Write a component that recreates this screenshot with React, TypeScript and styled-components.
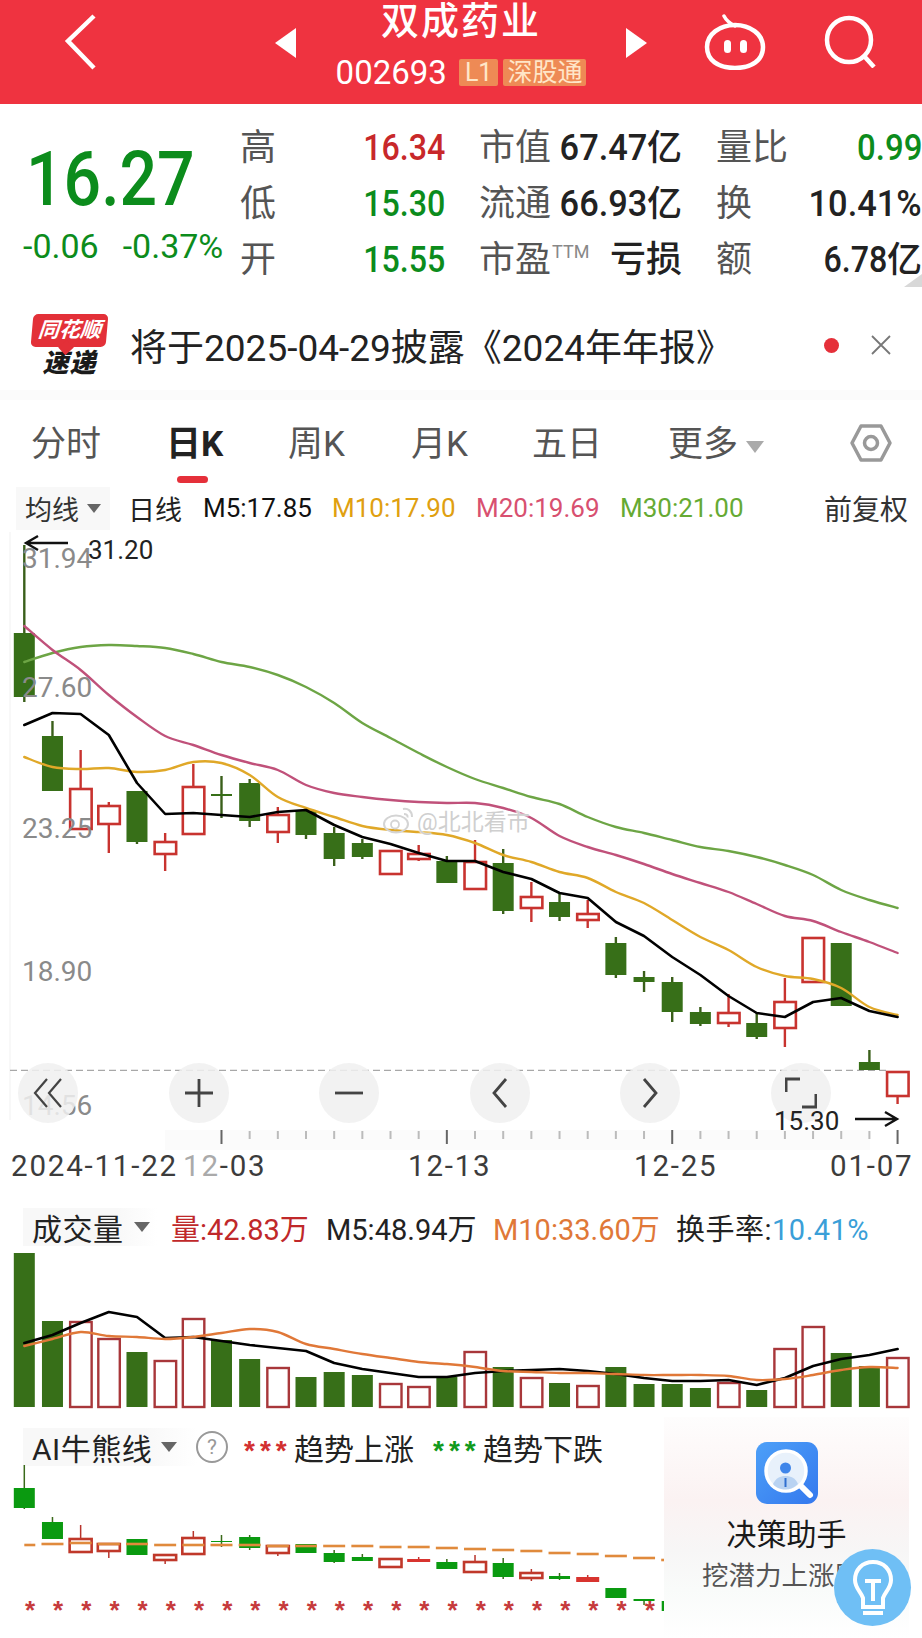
import React from 'react';
import styled, { createGlobalStyle } from 'styled-components';

const Global = createGlobalStyle`
  html, body { margin: 0; padding: 0; background: #fff; }
  body { font-family: Roboto, "Noto Sans CJK SC", sans-serif; color: #222; }
  #root { width: 922px; height: 1638px; overflow: hidden; }
`;

const Page = styled.div`
  position: relative;
  width: 922px;
  height: 1638px;
  overflow: hidden;
  background: #fff;
`;

/* ---------- header ---------- */
const Header = styled.header`
  height: 104px;
  background: #ef3340;
  display: grid;
  grid-template-columns: 275px 372px 275px;
  color: #fff;
`;
const HeaderSide = styled.div`
  display: flex;
  align-items: flex-start;
  padding-top: 14px;
  padding-left: ${p => p.$pad}px;
  gap: ${p => p.$gap || 0}px;
`;
const HeaderCenter = styled.div`
  display: flex;
  align-items: flex-start;
  justify-content: space-between;
`;
const Arrow = styled.div`
  margin-top: 28px;
  width: 0;
  height: 0;
  border-top: 15px solid transparent;
  border-bottom: 15px solid transparent;
  ${p => (p.$dir === 'left' ? 'border-right: 21px solid #fff;' : 'border-left: 21px solid #fff;')}
`;
const TitleBlock = styled.div`
  display: flex;
  flex-direction: column;
  align-items: center;
`;
const Title = styled.h1`
  margin: 0;
  height: 42px;
  font-size: 38px;
  line-height: 42px;
  font-weight: 500;
  letter-spacing: 2px;
  white-space: nowrap;
`;
const SubRow = styled.div`
  display: flex;
  align-items: center;
  gap: 5px;
  margin-top: 16px;
  height: 28px;
`;
const Ticker = styled.span`
  font-size: 33px;
  margin-right: 7px;
`;
const Badge = styled.span`
  height: 27px;
  line-height: 27px;
  padding: 0 ${p => p.$pad}px;
  background: #ee8a55;
  color: #ffe6c8;
  font-size: 25px;
  border-radius: 2px;
`;

/* ---------- quote ---------- */
const Quote = styled.section`
  height: 196px;
  display: flex;
  position: relative;
`;
const PriceBlock = styled.div`
  width: 240px;
  flex: none;
  padding: 35px 0 0 23px;
  box-sizing: border-box;
`;
const Price = styled.div`
  font-family: Roboto, sans-serif;
  font-size: 76px;
  line-height: 80px;
  font-weight: 500;
  color: #0c8c1c;
  transform: translateX(3px) scaleX(0.87);
  transform-origin: left center;
`;
const Deltas = styled.div`
  display: flex;
  gap: 24px;
  margin-top: 9px;
  font-size: 34px;
  line-height: 36px;
  color: #0c8c1c;
  white-space: nowrap;
`;
const QuoteGrid = styled.div`
  display: grid;
  grid-template-columns: 205px 203px 206px;
  grid-auto-rows: 56px;
  column-gap: 34px;
  padding-top: 12px;
`;
const Cell = styled.div`
  display: flex;
  align-items: center;
  justify-content: space-between;
  white-space: nowrap;
`;
const Label = styled.span`
  font-size: 36px;
  color: #555;
`;
const Ttm = styled.sup`
  font-size: 18px;
  color: #888;
  vertical-align: 14px;
  line-height: 0;
  margin-left: 1px;
`;
const Value = styled.span`
  display: flex;
  align-items: baseline;
  padding-top: 8px;
  font-size: 37px;
  font-weight: 500;
  line-height: 44px;
  color: ${p => p.$color || '#222'};
`;
const Digits = styled.span`
  display: inline-block;
  transform: scaleX(${p => p.$sx || 0.87});
  transform-origin: right center;
`;
const Unit = styled.span`
  font-size: 35px;
`;
const ValueBold = styled.span`
  font-size: 36px;
  font-weight: 500;
  color: #222;
`;
const Corner = styled.div`
  position: absolute;
  right: 0;
  bottom: 13px;
  width: 0;
  height: 0;
  border-left: 18px solid transparent;
  border-bottom: 13px solid #d8d8d8;
`;

/* ---------- news ---------- */
const News = styled.section`
  height: 90px;
  display: flex;
  align-items: center;
  padding: 0 31px 0 32px;
  box-sizing: border-box;
`;
const LogoBox = styled.div`
  width: 75px;
  flex: none;
  display: flex;
  flex-direction: column;
  align-items: center;
`;
const LogoBubble = styled.div`
  width: 75px;
  height: 33px;
  background: #e33038;
  border-radius: 5px;
  color: #fff;
  font-size: 21px;
  line-height: 33px;
  font-weight: 700;
  font-style: italic;
  text-align: center;
  white-space: nowrap;
  transform: skewX(-5deg);
  position: relative;
  &::after {
    content: '';
    position: absolute;
    left: 30px;
    bottom: -6px;
    width: 11px;
    height: 11px;
    background: #e33038;
    transform: rotate(45deg);
  }
`;
const LogoText = styled.div`
  margin-top: 3px;
  font-size: 26px;
  line-height: 27px;
  font-weight: 900;
  font-style: italic;
  color: #1a1a1a;
  letter-spacing: 1px;
`;
const NewsText = styled.div`
  flex: 1;
  margin: 8px 0 0 23px;
  font-size: 37px;
  line-height: 42px;
  color: #222;
  white-space: nowrap;
`;
const NewsDot = styled.span`
  width: 15px;
  height: 15px;
  border-radius: 50%;
  background: #e5303a;
  margin-right: 32px;
`;
const Band = styled.div`
  height: 10px;
  background: #fbfbfb;
`;

/* ---------- tabs ---------- */
const Tabs = styled.nav`
  height: 84px;
  position: relative;
  display: flex;
  align-items: center;
  padding: 0 31px 0 31px;
  box-sizing: border-box;
`;
const Tab = styled.span`
  width: ${p => p.$w}px;
  flex: none;
  font-size: 35px;
  line-height: 40px;
  margin-top: 6px;
  color: ${p => (p.$active ? '#222' : '#555')};
  font-weight: ${p => (p.$active ? 700 : 400)};
  position: relative;
  white-space: nowrap;
  ${p =>
    p.$active
      ? `&::after {
          content: '';
          position: absolute;
          left: 11px;
          top: 51px;
          width: 31px;
          height: 7px;
          border-radius: 4px;
          background: #e5303a;
        }`
      : ''}
`;
const Caret = styled.i`
  display: inline-block;
  width: 0;
  height: 0;
  border-left: ${p => p.$s}px solid transparent;
  border-right: ${p => p.$s}px solid transparent;
  border-top: ${p => Math.round(p.$s * 1.3)}px solid ${p => p.$c || '#666'};
  margin-left: ${p => p.$m || 0}px;
  vertical-align: middle;
`;
const HexWrap = styled.span`
  flex: none;
  margin-top: 2px;
  display: flex;
`;

/* ---------- indicators ---------- */
const IndicatorRow = styled.div`
  height: 48px;
  display: flex;
  align-items: center;
  padding-left: 16px;
  font-size: 27px;
  white-space: nowrap;
`;
const Chip = styled.div`
  width: 94px;
  height: 43px;
  flex: none;
  box-sizing: border-box;
  padding-left: 9px;
  display: flex;
  align-items: center;
  background: #f8f8f8;
  color: #333;
  margin-right: 18px;
`;
const MaText = styled.span`
  flex: none;
  width: ${p => p.$w}px;
  color: ${p => p.$c};
  font-size: ${p => p.$fs || 27}px;
`;

/* ---------- charts ---------- */
const ChartWrap = styled.div`
  position: relative;
  height: ${p => p.$h}px;
  margin-top: ${p => p.$mt || 0}px;
`;
const ChartSvg = styled.svg`
  display: block;
  width: 922px;
  height: 100%;
`;
const ToolBar = styled.div`
  position: absolute;
  left: 18px;
  top: 531px;
  display: flex;
  gap: 90.6px;
`;
const RoundBtn = styled.div`
  width: 60px;
  height: 60px;
  border-radius: 50%;
  background: rgba(240, 240, 240, 0.86);
  display: flex;
  align-items: center;
  justify-content: center;
  color: #444;
`;
const PriceTag = styled.span`
  position: absolute;
  left: 774px;
  top: 574px;
  font-size: 26px;
  line-height: 30px;
  color: #222;
`;
const Watermark = styled.div`
  position: absolute;
  left: 383px;
  top: 271px;
  display: flex;
  align-items: center;
  gap: 3px;
  font-size: 23px;
  color: #cfcfcf;
  text-shadow: 0 0 2px #fff, 0 0 2px #fff;
  white-space: nowrap;
`;
const PanelHead = styled.div`
  height: ${p => p.$h}px;
  margin-top: ${p => p.$mt || 0}px;
  display: flex;
  align-items: center;
  padding-left: 23px;
  white-space: nowrap;
  font-size: 29px;
`;
const HeadChip = styled.div`
  width: ${p => p.$w}px;
  height: 38px;
  flex: none;
  box-sizing: border-box;
  padding-left: 9px;
  display: flex;
  align-items: center;
  font-size: 30px;
  letter-spacing: 0.5px;
  color: #222;
  background: linear-gradient(90deg, #f8f8f8 70%, #fff);
`;
const HeadStat = styled.span`
  flex: none;
  width: ${p => p.$w}px;
  color: ${p => p.$c || '#222'};
`;
const Turnover = styled.span`
  letter-spacing: 0.5px;
`;
const Blue = styled.span`
  color: #3a9fd8;
`;
const Help = styled.span`
  width: 28px;
  height: 28px;
  flex: none;
  margin: 0 16px 0 -1px;
  border: 2px solid #999;
  border-radius: 50%;
  font-size: 21px;
  line-height: 28px;
  text-align: center;
  color: #999;
`;
const Stars = styled.span`
  flex: none;
  width: ${p => p.$w}px;
  font-family: "Liberation Sans", sans-serif;
  font-weight: 700;
  font-size: 28px;
  letter-spacing: 5px;
  color: ${p => p.$c};
  line-height: 30px;
  height: 22px;
`;
const TrendText = styled.span`
  flex: none;
  width: ${p => p.$w}px;
  font-size: 30px;
  color: #222;
`;

/* ---------- floating panel ---------- */
const Floating = styled.aside`
  position: absolute;
  left: 664px;
  top: 1417px;
  width: 245px;
  height: 221px;
  background: linear-gradient(180deg, #fefdfd 0%, #fbf2f2 38%, #f7f6f6 60%, #f9fbfa 78%, #fff 100%);
  display: flex;
  flex-direction: column;
  align-items: center;
  padding-top: 25px;
  box-sizing: border-box;
`;
const AssistantTitle = styled.div`
  margin-top: 11px;
  font-size: 30px;
  line-height: 40px;
  color: #1a1a1a;
`;
const AssistantSub = styled.div`
  margin-top: 4px;
  font-size: 26.5px;
  line-height: 34px;
  color: #555;
  white-space: nowrap;
  align-self: flex-start;
  padding-left: 38px;
`;
const Bulb = styled.div`
  position: absolute;
  left: 834px;
  top: 1549px;
  width: 77px;
  height: 77px;
  border-radius: 50%;
  background: #6fbff5;
  display: flex;
  align-items: center;
  justify-content: center;
`;

/* ---------- data ---------- */
const X = (i: number) => 24.3 + 28.17 * i;
type K = ['g' | 'r', number, number, number, number];
const candles: K[] = [
  ['g', 545, 633, 697, 702], ['g', 721, 736, 791, 791], ['r', 750, 788, 829, 829], ['r', 802, 805, 824, 853],
  ['g', 791, 791, 842, 844], ['r', 833, 841, 854, 871], ['r', 764, 786, 834, 834], ['g', 776, 794, 796, 818],
  ['g', 779, 783, 821, 827], ['r', 807, 814, 832, 843], ['g', 808, 811, 835, 839], ['g', 827, 833, 859, 866],
  ['g', 839, 843, 857, 859], ['r', 850, 850, 874, 874], ['r', 845, 853, 859, 861], ['g', 856, 861, 883, 883],
  ['r', 840, 861, 889, 889], ['g', 849, 863, 911, 914], ['r', 882, 896, 908, 922], ['g', 894, 902, 917, 921],
  ['r', 900, 913, 920, 928], ['g', 937, 943, 975, 978], ['g', 971, 977, 982, 992], ['g', 977, 982, 1012, 1022],
  ['g', 1007, 1012, 1024, 1026], ['r', 994, 1012, 1023, 1027], ['g', 1013, 1023, 1037, 1039], ['r', 978, 1001, 1028, 1047],
  ['r', 937, 937, 982, 982], ['g', 943, 943, 1006, 1006], ['g', 1050, 1062, 1070, 1070], ['r', 1071, 1071, 1096, 1104],
];
const m5 = [725, 713, 714, 735, 783, 814, 813, 815, 817, 812, 810, 825, 837, 844, 853, 861, 861, 872, 879, 893, 898, 922, 936, 957, 975, 996, 1013, 1017, 1002, 998, 1011, 1017];
const m10 = [757, 767, 769, 768, 772, 770, 762, 763, 775, 797, 808, 817, 826, 830, 832, 835, 843, 855, 862, 872, 878, 892, 903, 920, 937, 950, 967, 976, 979, 988, 1007, 1015];
const m20 = [626, 650, 670, 695, 717, 736, 745, 755, 763, 770, 785, 793, 797, 800, 802, 803, 803, 808, 818, 836, 847, 855, 864, 874, 883, 892, 904, 916, 921, 932, 942, 953];
const m30 = [662, 653, 647, 645, 646, 648, 654, 662, 667, 675, 687, 703, 723, 738, 753, 767, 779, 788, 797, 804, 817, 827, 833, 840, 847, 851, 857, 865, 875, 890, 900, 908];
const vols = [1253, 1321, 1321, 1338, 1352, 1360, 1318, 1340, 1359, 1367, 1377, 1372, 1375, 1383, 1386, 1377, 1351, 1367, 1377, 1383, 1385, 1367, 1384, 1384, 1388, 1382, 1390, 1348, 1326, 1353, 1366, 1357];
const vm5 = [1343, 1335, 1323, 1312, 1317, 1338, 1337, 1341, 1345, 1348, 1351, 1363, 1369, 1373, 1377, 1377, 1373, 1371, 1370, 1369, 1371, 1374, 1378, 1381, 1381, 1380, 1385, 1378, 1366, 1359, 1355, 1349];
const vm10 = [1346, 1339, 1332, 1336, 1337, 1339, 1337, 1333, 1329, 1332, 1344, 1349, 1354, 1358, 1362, 1364, 1367, 1371, 1372, 1373, 1373, 1374, 1375, 1375, 1375, 1376, 1380, 1379, 1375, 1370, 1367, 1368];
type A = ['g' | 'r' | 'p', number, number, number, number];
const ai: A[] = [
  ['g', 1465, 1488, 1508, 1509], ['g', 1517, 1522, 1539, 1539], ['r', 1525, 1538, 1552, 1552], ['r', 1543, 1543, 1551, 1558],
  ['g', 1539, 1539, 1555, 1555], ['r', 1554, 1554, 1560, 1564], ['r', 1531, 1537, 1554, 1554], ['g', 1535, 1541, 1542, 1547],
  ['g', 1535, 1537, 1548, 1550], ['r', 1545, 1545, 1553, 1556], ['g', 1544, 1544, 1553, 1553], ['g', 1550, 1553, 1562, 1563],
  ['g', 1554, 1557, 1561, 1561], ['r', 1558, 1558, 1567, 1567], ['p', 1557, 1559, 1562, 1562], ['g', 1559, 1562, 1569, 1569],
  ['r', 1555, 1561, 1572, 1572], ['g', 1558, 1563, 1577, 1579], ['r', 1569, 1572, 1578, 1581], ['g', 1573, 1576, 1579, 1580],
  ['p', 1575, 1577, 1582, 1582], ['g', 1588, 1588, 1598, 1598], ['g', 1599, 1599, 1601, 1605], ['g', 1601, 1601, 1611, 1611],
];
const aiDash = [1545, 1544, 1543, 1544, 1544, 1545, 1545, 1545, 1545, 1546, 1546, 1546, 1546, 1547, 1547, 1548, 1549, 1550, 1551, 1553, 1554, 1556, 1558, 1560];

const pts = (a: number[]) => a.map((y, i) => `${X(i).toFixed(1)},${y}`).join(' ');

/* Catmull-Rom through the daily values, as a moving-average line */
const smooth = (a: number[]) => {
  const p = a.map((y, i) => [X(i), y]);
  let d = `M${p[0][0].toFixed(1)} ${p[0][1]}`;
  for (let i = 0; i < p.length - 1; i++) {
    const p0 = p[Math.max(i - 1, 0)];
    const p1 = p[i];
    const p2 = p[i + 1];
    const p3 = p[Math.min(i + 2, p.length - 1)];
    const c1x = p1[0] + (p2[0] - p0[0]) / 6;
    const c1y = p1[1] + (p2[1] - p0[1]) / 6;
    const c2x = p2[0] - (p3[0] - p1[0]) / 6;
    const c2y = p2[1] - (p3[1] - p1[1]) / 6;
    d += `C${c1x.toFixed(1)} ${c1y.toFixed(1)} ${c2x.toFixed(1)} ${c2y.toFixed(1)} ${p2[0].toFixed(1)} ${p2[1]}`;
  }
  return d;
};

const GREEN = '#376f18';
const RED = '#c8332f';

const Candle = ({ i, k }: { i: number; k: K }) => {
  const [c, hi, t, b, lo] = k;
  const x = X(i);
  const green = c === 'g';
  return (
    <g>
      <line x1={x} x2={x} y1={hi} y2={lo} stroke={green ? '#3a5f1a' : RED} strokeWidth={2.4} />
      {green ? (
        <rect x={x - 10.5} y={t} width={21} height={b - t} fill={GREEN} />
      ) : (
        <rect x={x - 10.5} y={t + 1} width={21.5} height={b - t - 1} fill="#fff" stroke={RED} strokeWidth={2.6} />
      )}
    </g>
  );
};

const Line = ({ d, c, w = 2.4 }: { d: number[]; c: string; w?: number }) => (
  <path d={smooth(d)} fill="none" stroke={c} strokeWidth={w} strokeLinejoin="round" strokeLinecap="round" />
);
const BlackLine = ({ d }: { d: number[] }) => (
  <polyline points={pts(d)} fill="none" stroke="#000" strokeWidth={2.6} strokeLinejoin="round" strokeLinecap="round" />
);

const AxisText = styled.text`
  font-family: Roboto, sans-serif;
  font-size: 28px;
  fill: #8a8a8a;
`;
const DateText = styled.text`
  font-family: Roboto, sans-serif;
  font-size: 29.5px;
  letter-spacing: 1.8px;
  fill: #3c3c3c;
`;
const PriceMark = styled.text`
  font-family: Roboto, sans-serif;
  font-size: 26px;
  fill: #222;
`;
const Star = styled.text`
  font-family: "Liberation Sans", sans-serif;
  font-weight: 700;
  font-size: 26px;
  text-anchor: middle;
  fill: #c63a3c;
`;

const MainChart = () => (
  <ChartSvg viewBox="0 532 922 668">
    <line x1="10" x2="10" y1="532" y2="1120" stroke="#f6f6f6" strokeWidth="1.5" />
    <rect x="165" y="1130" width="705" height="20" fill="#fbfbfb" />
    <line x1="10" x2="886" y1="1070.3" y2="1070.3" stroke="#a8a8a8" strokeWidth="1.2" strokeDasharray="7 4" />
    {candles.map((k, i) => <Candle key={i} i={i} k={k} />)}
    <Line d={m30} c="#6da545" />
    <Line d={m20} c="#c0517a" />
    <Line d={m10} c="#e0a828" />
    <BlackLine d={m5} />
    <AxisText x="22" y="568">31.94</AxisText>
    <AxisText x="22" y="697">27.60</AxisText>
    <AxisText x="22" y="838">23.25</AxisText>
    <AxisText x="22" y="981">18.90</AxisText>
    <AxisText x="22" y="1115">14.56</AxisText>
    <PriceMark x="88" y="559">31.20</PriceMark>
    <path d="M68 543H26M38 536l-12 7 12 7" fill="none" stroke="#111" strokeWidth="2.4" />
    <path d="M855 1119h42M885 1112l12 7-12 7" fill="none" stroke="#111" strokeWidth="2.4" />
    {candles.slice(7).map((_, n) => {
      const i = n + 7;
      const major = (i - 7) % 8 === 0;
      return <line key={i} x1={X(i)} x2={X(i)} y1={major ? 1130 : 1131} y2={major ? 1144 : 1139} stroke={major ? '#666' : '#bbb'} strokeWidth={2} />;
    })}
    <DateText x="11" y="1176">2024-11-22</DateText>
    <DateText x="183" y="1176"><tspan fill="#aaa">12</tspan>-03</DateText>
    <DateText x="408" y="1176">12-13</DateText>
    <DateText x="634" y="1176">12-25</DateText>
    <DateText x="830" y="1176">01-07</DateText>
  </ChartSvg>
);

const VolumeChart = () => (
  <ChartSvg viewBox="0 1252 922 166">
    {vols.map((t, i) => {
      const x = X(i);
      return candles[i][0] === 'g' ? (
        <rect key={i} x={x - 10.5} y={t} width={21} height={1407 - t} fill={GREEN} />
      ) : (
        <rect key={i} x={x - 10.5} y={t + 1} width={21.5} height={1406 - t} fill="#fff" stroke="#a8373a" strokeWidth={2.4} />
      );
    })}
    <BlackLine d={vm5} />
    <Line d={vm10} c="#e07838" />
  </ChartSvg>
);

const AiCandle = ({ i, k }: { i: number; k: A }) => {
  const [c, hi, t, b, lo] = k;
  const x = X(i);
  if (c === 'g')
    return (
      <g>
        <line x1={x} x2={x} y1={hi} y2={lo} stroke="#3a6a1a" strokeWidth={1.5} />
        <rect x={x - 10.5} y={t} width={21} height={b - t} fill="#0a9a10" />
      </g>
    );
  if (c === 'p')
    return (
      <g>
        <line x1={x} x2={x} y1={hi} y2={lo} stroke="#c8332f" strokeWidth={1.5} />
        <rect x={x - 11.5} y={t} width={23} height={b - t} fill="#d8342f" />
      </g>
    );
  return (
    <g>
      <line x1={x} x2={x} y1={hi} y2={lo} stroke="#b8342c" strokeWidth={1.5} />
      <rect x={x - 11} y={t + 1} width={22} height={b - t - 1} fill="#fff" stroke="#c0382a" strokeWidth={2.6} />
    </g>
  );
};

const AiChart = () => (
  <ChartSvg viewBox="0 1463 922 175">
    {ai.map((k, i) => <AiCandle key={i} i={i} k={k} />)}
    {aiDash.map((y, i) => (
      <line key={i} x1={i === 0 ? X(0) : X(i) - 11} x2={X(i) + 11} y1={y} y2={y} stroke="#e08a3c" strokeWidth={2.6} />
    ))}
    {Array.from({ length: 23 }, (_, i) => (
      <Star key={i} x={30 + 28.17 * i} y={1619}>*</Star>
    ))}
  </ChartSvg>
);

const DecisionIcon = () => (
  <svg width="62" height="62" viewBox="0 0 62 62">
    <defs>
      <linearGradient id="dg" x1="0" y1="0" x2="1" y2="1">
        <stop offset="0" stopColor="#4da0f8" />
        <stop offset="1" stopColor="#3478ee" />
      </linearGradient>
    </defs>
    <rect width="62" height="62" rx="11" fill="url(#dg)" />
    <circle cx="30" cy="29" r="20" fill="#e8f1fb" stroke="#fff" strokeWidth="3.5" />
    <circle cx="29.5" cy="26" r="5.5" fill="#3f86ea" />
    <path d="M17 42c3-6 7-8 12.500-8s10 2 12.500 8c-4 4-8 5.500-12.500 5.500S20 46 17 42z" fill="#b9d3f2" />
    <path d="M29.500 36v9" stroke="#2f6fd0" strokeWidth="2" />
    <path d="M45 44l9 9" stroke="#fff" strokeWidth="6" strokeLinecap="round" />
  </svg>
);

export default function App() {
  return (
    <Page>
      <Global />
      <Header>
        <HeaderSide $pad={62}>
          <svg width="38" height="56" viewBox="0 0 38 56">
            <path d="M33 2 L7 27 L33 54" fill="none" stroke="#fff" strokeWidth="4.500" strokeLinejoin="miter" transform="translate(-1 0)" />
          </svg>
        </HeaderSide>
        <HeaderCenter>
          <Arrow $dir="left" />
          <TitleBlock>
            <Title>双成药业</Title>
            <SubRow>
              <Ticker>002693</Ticker>
              <Badge $pad={6}>L1</Badge>
              <Badge $pad={4}>深股通</Badge>
            </SubRow>
          </TitleBlock>
          <Arrow $dir="right" />
        </HeaderCenter>
        <HeaderSide $pad={57} $gap={58}>
          <svg width="62" height="56" viewBox="0 0 62 56" style={{ flex: 'none' }}>
            <path d="M31 12C25 9 22 6 20 2" fill="none" stroke="#fff" strokeWidth="3.5" strokeLinecap="round" />
            <path d="M31 11c15 0 28 9 28 22 0 13-11 21-28 21S3 46 3 33c0-13 13-22 28-22z" fill="none" stroke="#fff" strokeWidth="4.500" />
            <rect x="20" y="26" width="7" height="13" rx="3.500" fill="#fff" />
            <rect x="36" y="26" width="7" height="13" rx="3.500" fill="#fff" />
          </svg>
          <svg width="52" height="54" viewBox="0 0 52 54" style={{ flex: 'none' }}>
            <circle cx="25" cy="26" r="22" fill="none" stroke="#fff" strokeWidth="4.500" />
            <path d="M40 42l10 11" stroke="#fff" strokeWidth="4.500" />
          </svg>
        </HeaderSide>
      </Header>

      <Quote>
        <PriceBlock>
          <Price>16.27</Price>
          <Deltas>
            <span>-0.06</span>
            <span>-0.37%</span>
          </Deltas>
        </PriceBlock>
        <QuoteGrid>
          <Cell><Label>高</Label><Value $color="#c8282a"><Digits>16.34</Digits></Value></Cell>
          <Cell><Label>市值</Label><Value><Digits $sx={0.93}>67.47</Digits><Unit>亿</Unit></Value></Cell>
          <Cell><Label>量比</Label><Value $color="#0c8c1c"><Digits $sx={0.89}>0.99</Digits></Value></Cell>
          <Cell><Label>低</Label><Value $color="#0c8c1c"><Digits>15.30</Digits></Value></Cell>
          <Cell><Label>流通</Label><Value><Digits $sx={0.93}>66.93</Digits><Unit>亿</Unit></Value></Cell>
          <Cell><Label>换</Label><Value><Digits $sx={0.93}>10.41%</Digits></Value></Cell>
          <Cell><Label>开</Label><Value $color="#0c8c1c"><Digits>15.55</Digits></Value></Cell>
          <Cell><Label>市盈<Ttm>TTM</Ttm></Label><ValueBold>亏损</ValueBold></Cell>
          <Cell><Label>额</Label><Value><Digits>6.78</Digits><Unit>亿</Unit></Value></Cell>
        </QuoteGrid>
        <Corner />
      </Quote>

      <News>
        <LogoBox>
          <LogoBubble>同花顺</LogoBubble>
          <LogoText>速递</LogoText>
        </LogoBox>
        <NewsText>将于2025-04-29披露《2024年年报》</NewsText>
        <NewsDot />
        <svg width="20" height="20" viewBox="0 0 20 20" style={{ flex: 'none' }}>
          <path d="M1 1l18 18M19 1L1 19" stroke="#777" strokeWidth="1.800" />
        </svg>
      </News>
      <Band />

      <Tabs>
        <Tab $w={135}>分时</Tab>
        <Tab $w={122} $active>日K</Tab>
        <Tab $w={123}>周K</Tab>
        <Tab $w={121}>月K</Tab>
        <Tab $w={136}>五日</Tab>
        <Tab $w={182}>更多<Caret $s={9} $c="#aaa" $m={8} /></Tab>
        <HexWrap>
          <svg width="42" height="38" viewBox="0 0 42 38">
            <path d="M11 2h20l9 17-9 17H11L2 19z" fill="none" stroke="#999" strokeWidth="3.500" strokeLinejoin="round" />
            <circle cx="21" cy="19" r="6.500" fill="none" stroke="#999" strokeWidth="3.500" />
          </svg>
        </HexWrap>
      </Tabs>

      <IndicatorRow>
        <Chip>均线<Caret $s={7} $c="#666" $m={8} /></Chip>
        <MaText $w={75} $c="#222">日线</MaText>
        <MaText $w={129} $c="#111" $fs={26}>M5:17.85</MaText>
        <MaText $w={144} $c="#e0a010" $fs={26}>M10:17.90</MaText>
        <MaText $w={144} $c="#d85070" $fs={26}>M20:19.69</MaText>
        <MaText $w={204} $c="#66aa33" $fs={26}>M30:21.00</MaText>
        <MaText $w={84} $c="#333" $fs={28}>前复权</MaText>
      </IndicatorRow>

      <ChartWrap $h={668}>
        <MainChart />
        <Watermark>
          <svg width="31" height="28" viewBox="0 0 31 28">
            <ellipse cx="13" cy="18" rx="12" ry="8.500" fill="none" stroke="#d4d4d4" strokeWidth="2" />
            <circle cx="12" cy="18.500" r="4" fill="none" stroke="#d4d4d4" strokeWidth="1.800" />
            <path d="M20 3c5-1 9 2 9 8M21 8c2 0 4 1 3.500 3.500" fill="none" stroke="#d4d4d4" strokeWidth="2" />
          </svg>
          <span>@北北看市</span>
        </Watermark>
        <ToolBar>
          <RoundBtn>
            <svg width="30" height="32" viewBox="0 0 30 32"><path d="M14 2L2 16l12 14M28 2L16 16l12 14" fill="none" stroke="#444" strokeWidth="2.200" /></svg>
          </RoundBtn>
          <RoundBtn>
            <svg width="30" height="30" viewBox="0 0 30 30"><path d="M15 1v28M1 15h28" stroke="#444" strokeWidth="2.800" /></svg>
          </RoundBtn>
          <RoundBtn>
            <svg width="30" height="30" viewBox="0 0 30 30"><path d="M1 15h28" stroke="#444" strokeWidth="2.800" /></svg>
          </RoundBtn>
          <RoundBtn>
            <svg width="18" height="32" viewBox="0 0 18 32"><path d="M15 2L3 16l12 14" fill="none" stroke="#444" strokeWidth="2.800" /></svg>
          </RoundBtn>
          <RoundBtn>
            <svg width="18" height="32" viewBox="0 0 18 32"><path d="M3 2l12 14L3 30" fill="none" stroke="#444" strokeWidth="2.800" /></svg>
          </RoundBtn>
          <RoundBtn>
            <svg width="32" height="32" viewBox="0 0 32 32"><path d="M1 15V2h14M31 17v13H17" fill="none" stroke="#444" strokeWidth="3" /></svg>
          </RoundBtn>
        </ToolBar>
        <PriceTag>15.30</PriceTag>
      </ChartWrap>

      <PanelHead $h={50} $mt={2}>
        <HeadChip $w={134}>成交量<Caret $s={8} $c="#666" $m={10} /></HeadChip>
        <HeadStat $w={14} />
        <HeadStat $w={155} $c="#c0282a">量:42.83万</HeadStat>
        <HeadStat $w={167}>M5:48.94万</HeadStat>
        <HeadStat $w={183} $c="#e07838">M10:33.60万</HeadStat>
        <Turnover>换手率:<Blue>10.41%</Blue></Turnover>
      </PanelHead>
      <ChartWrap $h={166}>
        <VolumeChart />
      </ChartWrap>
      <PanelHead $h={40} $mt={9}>
        <HeadChip $w={174}>AI牛熊线<Caret $s={8} $c="#666" $m={9} /></HeadChip>
        <Help>?</Help>
        <Stars $w={50} $c="#d23030">***</Stars>
        <TrendText $w={139}>趋势上涨</TrendText>
        <Stars $w={50} $c="#119a1c">***</Stars>
        <TrendText $w={125}>趋势下跌</TrendText>
      </PanelHead>
      <ChartWrap $h={175} $mt={-4}>
        <AiChart />
      </ChartWrap>

      <Floating>
        <DecisionIcon />
        <AssistantTitle>决策助手</AssistantTitle>
        <AssistantSub>挖潜力上涨股</AssistantSub>
      </Floating>
      <Bulb>
        <svg width="40" height="58" viewBox="0 0 40 58">
          <path d="M20 3C9 3 2 11 2 21c0 8 6 12 8 18v9h20v-9c2-6 8-10 8-18C38 11 31 3 20 3z" fill="none" stroke="#fff" strokeWidth="4" />
          <path d="M12 22h16M20 22v20M10 54h20" stroke="#fff" strokeWidth="4" />
        </svg>
      </Bulb>
    </Page>
  );
}
